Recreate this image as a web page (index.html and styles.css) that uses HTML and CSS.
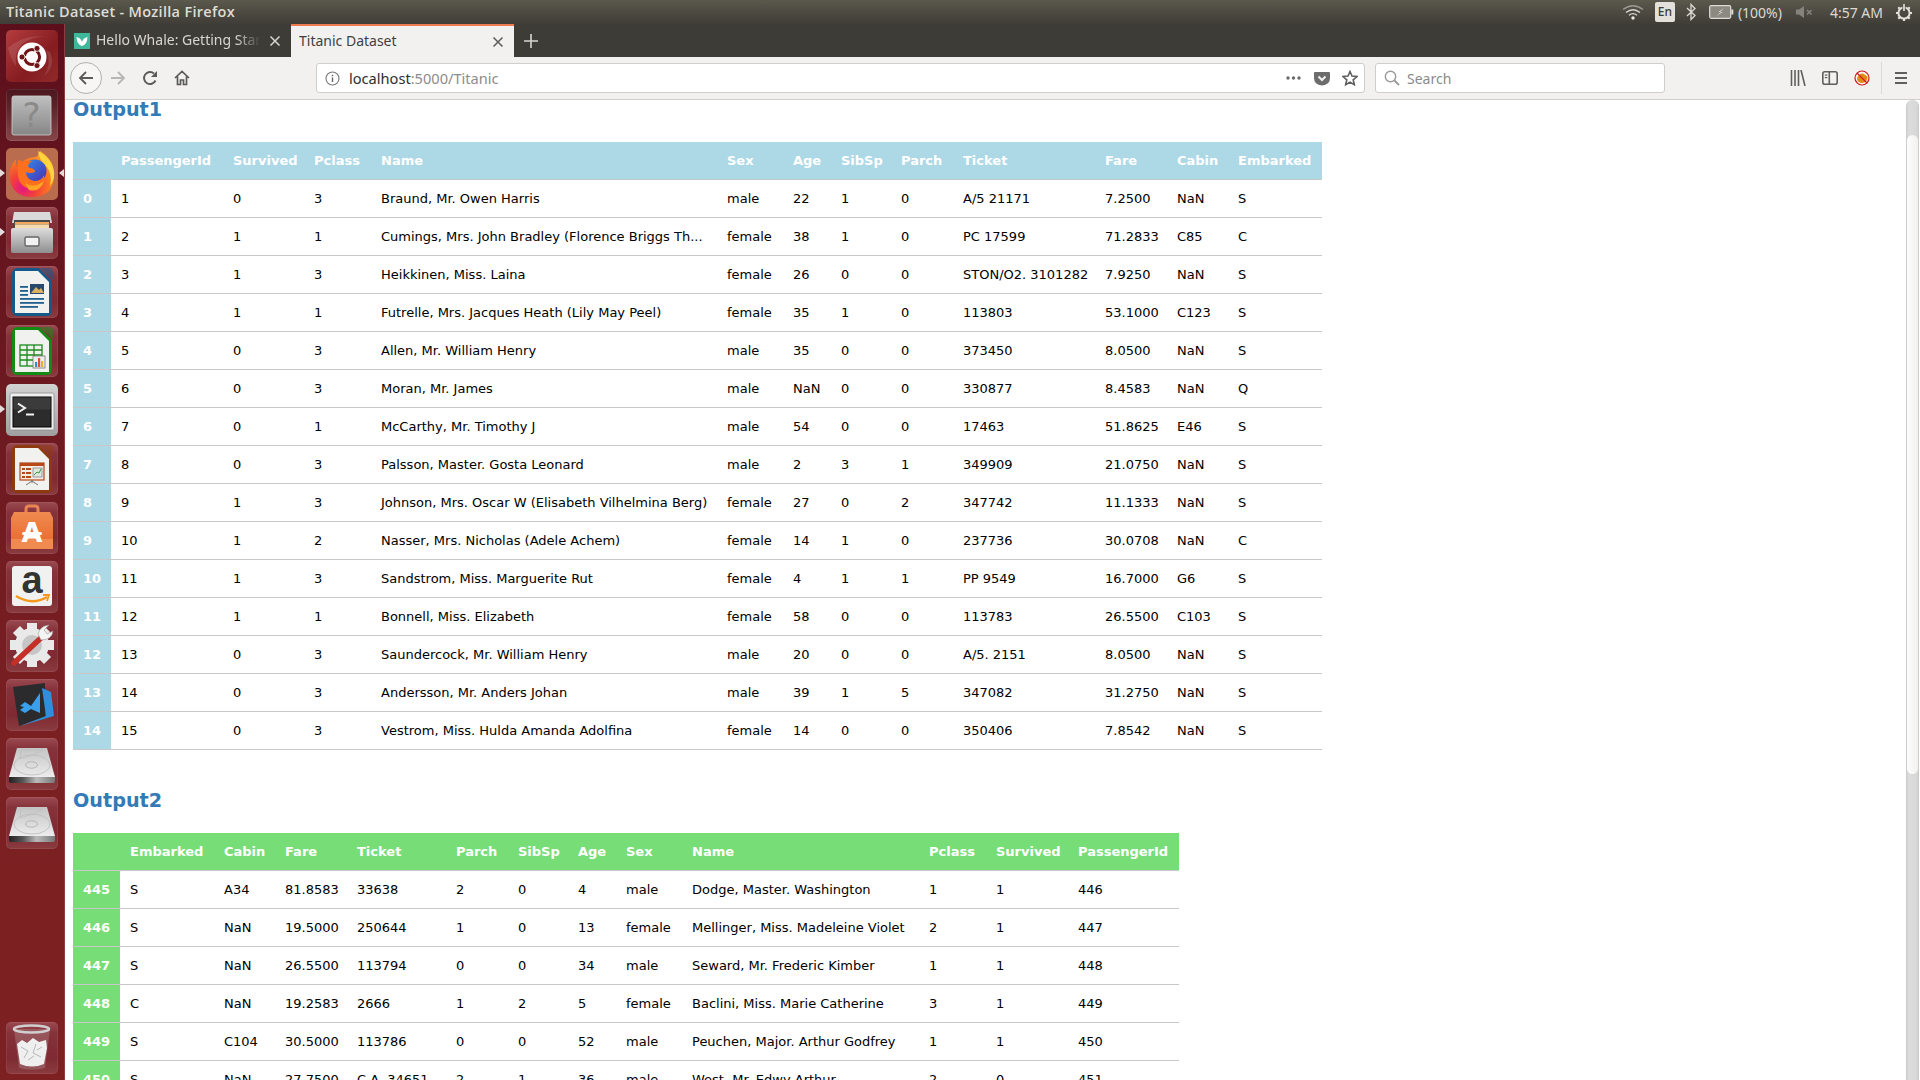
FILE: index.html
```html
<!DOCTYPE html>
<html lang="en">
<head>
<meta charset="utf-8">
<title>Titanic Dataset</title>
<link rel="stylesheet" href="styles.css">
</head>
<body>
<svg class="defs" width="0" height="0" aria-hidden="true">
  <defs>
    <linearGradient id="hddTop" x1="0" y1="0" x2="0" y2="1"><stop offset="0" stop-color="#c4c4c4"/><stop offset="1" stop-color="#ececec"/></linearGradient>
    <linearGradient id="hddFront" x1="0" y1="0" x2="1" y2="0"><stop offset="0" stop-color="#222"/><stop offset="0.3" stop-color="#555"/><stop offset="0.6" stop-color="#bbb"/><stop offset="1" stop-color="#777"/></linearGradient>
    <radialGradient id="foxBody" cx="0.3" cy="0.8" r="0.95"><stop offset="0" stop-color="#e31587"/><stop offset="0.3" stop-color="#f2403a"/><stop offset="0.65" stop-color="#ff7a1f"/><stop offset="1" stop-color="#ffbd2e"/></radialGradient>
    <linearGradient id="foxGlobe" x1="0" y1="0" x2="1" y2="1"><stop offset="0" stop-color="#2f8fe8"/><stop offset="1" stop-color="#4c2ab5"/></linearGradient>
    <linearGradient id="boxGrey" x1="0" y1="0" x2="0" y2="1"><stop offset="0" stop-color="#bfbfbf"/><stop offset="1" stop-color="#868686"/></linearGradient>
    <linearGradient id="bagOrange" x1="0" y1="0" x2="0" y2="1"><stop offset="0" stop-color="#f08a50"/><stop offset="1" stop-color="#e8662a"/></linearGradient>
    <linearGradient id="cabinet" x1="0" y1="0" x2="0" y2="1"><stop offset="0" stop-color="#dcdcdc"/><stop offset="1" stop-color="#8f8f8f"/></linearGradient>
    <symbol id="hdd" viewBox="0 0 52 52">
      <path d="M11 10H41L49 39H3Z" fill="url(#hddTop)"/>
      <ellipse cx="26" cy="27" rx="18" ry="10" fill="none" stroke="#bcbcbc" stroke-width="0.8"/>
      <ellipse cx="25.500" cy="27" rx="6" ry="3.200" fill="none" stroke="#b0b0b0" stroke-width="0.9"/>
      <path d="M15 12H37L27 17L14 21Z" fill="none" stroke="#bdbdbd" stroke-width="0.7"/>
      <path d="M3 39H49V43Q49 45 47 45H5Q3 45 3 43Z" fill="url(#hddFront)"/>
    </symbol>
    <symbol id="doc" viewBox="0 0 52 52">
      <path d="M6 8Q6 2 12 2H33L46 15V44Q46 50 40 50H12Q6 50 6 44Z" fill="currentColor"/>
      <path d="M9 5H32L43 16V47H9Z" fill="#f1f1ef"/>
      <path d="M34 2H43Q47 2 47 6V14Z" fill="currentColor" opacity="0.55"/>
    </symbol>
  </defs>
</svg>

<header class="panel">
  <div class="panel-title">Titanic Dataset - Mozilla Firefox</div>
  <div class="tray">
    <svg class="tray-wifi" width="22" height="16" viewBox="0 0 22 16"><g fill="none" stroke="#d8d6d0" stroke-width="1.4"><path d="M1 5.500Q11 -2 21 5.500" opacity="0.55"/><path d="M4 8.500Q11 3 18 8.500"/><path d="M7 11.200Q11 8 15 11.200"/></g><circle cx="11" cy="14" r="1.7" fill="#e8e6e0"/></svg>
    <div class="tray-lang">En</div>
    <svg class="tray-bt" width="10" height="18" viewBox="0 0 10 18"><path d="M1 5L9 12.500L5 16.500V1.500L9 5.500L1 13" fill="none" stroke="#dedcd6" stroke-width="1.3"/></svg>
    <svg class="tray-batt" width="25" height="14" viewBox="0 0 25 14"><rect x="0.7" y="0.7" width="21" height="12.600" rx="1.5" fill="#8b8980" stroke="#dedcd6" stroke-width="1.2"/><rect x="22.300" y="4.500" width="2" height="5" fill="#dedcd6"/><path d="M15 3L9.500 7H12L7.500 11L13.500 7H11Z" fill="#f0eee8"/></svg>
    <div class="tray-text tray-pct">(100%)</div>
    <svg class="tray-mute" width="17" height="14" viewBox="0 0 17 14"><path d="M0 4.500H3L8 1V13L3 9.500H0Z" fill="#85837b"/><path d="M11 5L15.500 9.500M15.500 5L11 9.500" stroke="#85837b" stroke-width="1.5"/></svg>
    <div class="tray-text tray-time">4:57 AM</div>
    <svg class="tray-power" width="18" height="18" viewBox="0 0 18 18"><g fill="none" stroke="#e2e0da"><circle cx="9" cy="10" r="5.600" stroke-width="2"/><path d="M9 1V9" stroke-width="3" stroke="#48463f"/><path d="M9 1V8" stroke-width="1.7"/><path d="M1 10H3.500M14.500 10H17M3.300 4.300L5 6M3.300 15.700L5 14M14.700 15.700L13 14M14.700 4.300L13 6M9 15.500V18" stroke-width="2.200"/></g></svg>
  </div>
</header>

<div class="desktop">
  <nav class="launcher">
    <div class="tile tile-ubuntu">
      <svg width="52" height="52" viewBox="0 0 52 52"><path d="M2 18Q20 2 46 8Q30 4 16 14Q8 22 10 36Q4 28 2 18Z" fill="#fff" opacity="0.12"/><path d="M44 22Q50 36 38 46Q46 34 40 20Z" fill="#fff" opacity="0.12"/><circle cx="26" cy="27" r="14.500" fill="#fff"/><circle cx="26" cy="27" r="7.600" fill="none" stroke="#6f1417" stroke-width="3"/><g stroke="#fff" stroke-width="1.6"><path d="M26 27L17 27M26 27L30.500 19.200M26 27L30.500 34.800"/></g><g fill="#6f1417" stroke="#fff" stroke-width="0.8"><circle cx="16" cy="27" r="3"/><circle cx="31" cy="18.400" r="3"/><circle cx="31" cy="35.600" r="3"/></g></svg>
    </div>
    <div class="tile tile-help">
      <svg width="52" height="52" viewBox="0 0 52 52"><rect x="6" y="7" width="39" height="39" rx="2" fill="url(#boxGrey)" stroke="#d0d0d0" stroke-width="0.8"/><text x="25.500" y="38" class="help-mark">?</text></svg>
    </div>
    <div class="tile tile-firefox">
      <svg width="52" height="52" viewBox="0 0 52 52"><path d="M34 3Q50 13 48 30Q46 49 26 49Q7 49 4 32Q2 20 10 11Q9 17 12 19Q18 9 30 9Q34 6 34 3Z" fill="url(#foxBody)"/><path d="M32 3Q49 12 48 29Q47 34 44 38Q47 26 40 18Q33 12 32 3Z" fill="#ffd53d"/><circle cx="29" cy="23" r="11.500" fill="url(#foxGlobe)"/><path d="M12 12Q18 14 27 13Q20 16 23 20Q29 20 29 24Q24 26 20 24Q20 31 28 33Q36 33 38 27Q40 40 26 41Q14 40 12 28Q11 19 12 12Z" fill="#ff6f1c"/><path d="M19 35Q28 41 38 33Q34 45 23 42Z" fill="#ffa526"/></svg>
    </div>
    <div class="tile tile-dark">
      <svg width="52" height="52" viewBox="0 0 52 52"><path d="M8 5H44L46 16H6Z" fill="#d9d9d9"/><rect x="8" y="13" width="36" height="10" fill="#4a4a4a"/><rect x="9" y="15" width="34" height="2.500" fill="#f0a860"/><rect x="9" y="17.500" width="34" height="4" fill="#f7d9ae"/><rect x="5" y="21" width="42" height="25" rx="2" fill="url(#cabinet)"/><rect x="19" y="30" width="14" height="9" rx="1.5" fill="#f2f2f2" stroke="#666" stroke-width="1.4"/></svg>
    </div>
    <div class="tile tile-dark">
      <svg class="ico-writer" width="52" height="52" viewBox="0 0 52 52"><use href="#doc"/><rect x="14" y="20" width="8" height="1.8" fill="#1f5f8e"/><rect x="14" y="24" width="8" height="1.8" fill="#1f5f8e"/><rect x="14" y="28" width="8" height="1.8" fill="#1f5f8e"/><rect x="14" y="32" width="24" height="1.8" fill="#1f5f8e"/><rect x="14" y="36" width="24" height="1.8" fill="#1f5f8e"/><rect x="14" y="40" width="18" height="1.8" fill="#1f5f8e"/><rect x="24" y="18" width="14" height="10" fill="#27496d"/><path d="M25 27L30 21L33 24L35 22L38 27Z" fill="#d9b060"/></svg>
    </div>
    <div class="tile tile-dark">
      <svg class="ico-calc" width="52" height="52" viewBox="0 0 52 52"><use href="#doc"/><g fill="none" stroke="#1c8a1e" stroke-width="1.3"><rect x="14" y="20" width="22" height="21"/><path d="M14 25H36M14 30H36M14 35H36M21 20V41M28 20V41"/></g><rect x="27" y="31" width="12" height="12" fill="#eee" stroke="#777" stroke-width="0.8"/><rect x="29" y="37" width="2.200" height="5" fill="#2b8fd8"/><rect x="32" y="33" width="2.200" height="9" fill="#e05030"/><rect x="35" y="36" width="2.200" height="6" fill="#e6b030"/></svg>
    </div>
    <div class="tile tile-term">
      <svg width="52" height="52" viewBox="0 0 52 52"><rect x="4" y="9" width="44" height="37" rx="1.5" fill="#eee" stroke="#8a8a8a" stroke-width="0.8"/><rect x="6.500" y="12.500" width="39" height="31" fill="#000"/><rect x="7.500" y="13.500" width="37" height="29" fill="#2c2c2c"/><rect x="7.500" y="13.500" width="37" height="12" fill="#3b3b3b"/><path d="M12 19.500L19 24L12 28.500" fill="none" stroke="#f2f2f2" stroke-width="2"/><rect x="20" y="29.500" width="8" height="2" fill="#f2f2f2"/></svg>
    </div>
    <div class="tile tile-dark">
      <svg class="ico-impress" width="52" height="52" viewBox="0 0 52 52"><use href="#doc"/><rect x="14" y="20" width="24" height="17" fill="#f6ece4" stroke="#b5491a" stroke-width="1.2"/><rect x="14" y="20" width="24" height="3" fill="#b5491a"/><g fill="#b5491a"><rect x="16" y="25" width="3" height="2"/><rect x="20" y="25" width="5" height="2"/><rect x="16" y="29" width="3" height="2"/><rect x="20" y="29" width="5" height="2"/><rect x="16" y="33" width="3" height="2"/><rect x="20" y="33" width="5" height="2"/></g><rect x="27" y="25" width="9" height="9" fill="#dce8dc" stroke="#667" stroke-width="0.6"/><path d="M28 32L31 29L33 30L35 26" fill="none" stroke="#3b9a3b" stroke-width="1"/><path d="M26 37V40M26 38L20 42M26 38L32 42" stroke="#777" stroke-width="1" fill="none"/></svg>
    </div>
    <div class="tile tile-dark">
      <svg width="52" height="52" viewBox="0 0 52 52"><path d="M20 12V7Q20 4 23 4H29Q32 4 32 7V12" fill="none" stroke="#e98552" stroke-width="3"/><path d="M8 10H44L47 16V47H5V16Z" fill="url(#bagOrange)"/><rect x="5" y="37" width="42" height="10" fill="#f08a50"/><text x="26" y="40" class="bag-mark">A</text><rect x="16" y="30" width="20" height="3" rx="1.5" fill="#fff"/></svg>
    </div>
    <div class="tile tile-dark">
      <svg width="52" height="52" viewBox="0 0 52 52"><rect x="6" y="5" width="40" height="40" rx="3" fill="#f1f1f1"/><text x="26" y="32" class="amazon-mark">a</text><path d="M10 35Q26 45 41 36" fill="none" stroke="#f39a1d" stroke-width="2.400"/><path d="M37 34L43 34L41 40" fill="none" stroke="#f39a1d" stroke-width="1.8"/></svg>
    </div>
    <div class="tile tile-dark">
      <svg width="52" height="52" viewBox="0 0 52 52"><g fill="#e9e9e9"><rect x="21" y="3" width="10" height="44"/><rect x="21" y="3" width="10" height="44" transform="rotate(45 26 25)"/><rect x="21" y="3" width="10" height="44" transform="rotate(90 26 25)"/><rect x="21" y="3" width="10" height="44" transform="rotate(135 26 25)"/><circle cx="26" cy="25" r="17"/></g><circle cx="26" cy="25" r="10" fill="#c6c6c6"/><path d="M8 43L36 17" stroke="#c62e28" stroke-width="5.500" stroke-linecap="round"/><path d="M35 20L32 14Q34 6 43 5L38 10L41 14L47 11Q46 20 35 20Z" fill="#f4f4f4" stroke="#999" stroke-width="0.6"/></svg>
    </div>
    <div class="tile tile-dark">
      <svg width="52" height="52" viewBox="0 0 52 52"><path d="M7 8L39 4L39 38L13 47Z" fill="#2b2b2d"/><path d="M36 9L45 13L48 37L14 47L40 37Z" fill="#2f8fdc"/><path d="M14 27L19 23L25 27L34 14V34L25 30L19 34L14 31L18 28Z" fill="#3aa0ee"/></svg>
    </div>
    <div class="tile tile-dark"><svg width="52" height="52"><use href="#hdd"/></svg></div>
    <div class="tile tile-dark"><svg width="52" height="52"><use href="#hdd"/></svg></div>
    <div class="tile tile-dark tile-trash">
      <svg width="52" height="52" viewBox="0 0 52 52"><path d="M8 7L13 46Q26 49 39 46L44 7Z" fill="#d8d8d8" opacity="0.22"/><path d="M11 22L16 18L21 21L27 16L33 20L40 18L41 26L38 42Q26 47 14 42Z" fill="#efefef"/><path d="M15 25L22 29L18 36M30 22L27 31L35 35M22 38L28 34M36 25L31 28" fill="none" stroke="#b8b8b8" stroke-width="1"/><ellipse cx="25.500" cy="7" rx="17.500" ry="3.500" fill="none" stroke="#cfcfcf" stroke-width="2.600"/></svg>
    </div>
    <i class="pip pip-l pip-fox-l"></i>
    <i class="pip pip-r pip-fox-r"></i>
    <i class="pip pip-l pip-files"></i>
    <i class="pip pip-l pip-term"></i>
  </nav>

  <main class="browser">
    <div class="tabstrip">
      <div class="tab tab-bg">
        <svg class="favicon" width="16" height="16" viewBox="0 0 16 16"><rect width="16" height="16" fill="#3fb79b"/><path d="M8 13Q3 12 2.500 4Q7 5 8 9Q9 5 13.500 4Q13 12 8 13Z" fill="#fff"/></svg>
        <span class="tab-label">Hello Whale: Getting Started</span>
        <svg class="tab-close" width="12" height="12" viewBox="0 0 12 12"><path d="M1.500 1.500L10.500 10.500M10.500 1.500L1.500 10.500" stroke="#d8d6d0" stroke-width="1.5"/></svg>
      </div>
      <div class="tab tab-active">
        <span class="tab-label">Titanic Dataset</span>
        <svg class="tab-close" width="12" height="12" viewBox="0 0 12 12"><path d="M1.500 1.500L10.500 10.500M10.500 1.500L1.500 10.500" stroke="#5b5b5b" stroke-width="1.5"/></svg>
      </div>
      <svg class="newtab" width="14" height="14" viewBox="0 0 14 14"><path d="M7 0V14M0 7H14" stroke="#d8d6d0" stroke-width="1.6"/></svg>
    </div>

    <div class="toolbar">
      <div class="nav-back"><svg width="16" height="16" viewBox="0 0 16 16"><path d="M15 8H2M8 2L2 8L8 14" fill="none" stroke="#5a5a5a" stroke-width="1.8"/></svg></div>
      <svg class="nav-fwd" width="16" height="16" viewBox="0 0 16 16"><path d="M1 8H14M8 2L14 8L8 14" fill="none" stroke="#b6b6b6" stroke-width="1.8"/></svg>
      <svg class="nav-reload" width="16" height="16" viewBox="0 0 16 16"><path d="M13.500 10.500A6 6 0 1 1 12 3.500" fill="none" stroke="#5a5a5a" stroke-width="1.9"/><path d="M15 1V7H9Z" fill="#5a5a5a"/></svg>
      <svg class="nav-home" width="16" height="16" viewBox="0 0 16 16"><path d="M1 8L8 1.500L15 8M3.500 6.500V14.500H6.500V10H9.500V14.500H12.500V6.500" fill="none" stroke="#5a5a5a" stroke-width="1.7"/></svg>
      <div class="urlbar">
        <svg class="url-info" width="15" height="15" viewBox="0 0 15 15"><circle cx="7.500" cy="7.500" r="6.500" fill="none" stroke="#777" stroke-width="1.1"/><rect x="6.800" y="6.500" width="1.4" height="4.500" fill="#666"/><rect x="6.800" y="3.800" width="1.4" height="1.5" fill="#666"/></svg>
        <span class="url-text"><b class="url-host">localhost</b>:5000/Titanic</span>
        <svg class="url-dots" width="15" height="4" viewBox="0 0 15 4"><g fill="#6a6a6a"><circle cx="2" cy="2" r="1.7"/><circle cx="7.500" cy="2" r="1.7"/><circle cx="13" cy="2" r="1.7"/></g></svg>
        <svg class="url-pocket" width="16" height="15" viewBox="0 0 16 15"><path d="M1 1H15Q16 1 16 2V7Q16 14 8 14.500Q0 14 0 7V2Q0 1 1 1Z" fill="#6c6c6c"/><path d="M4.500 5.500L8 9L11.500 5.500" fill="none" stroke="#f2f1ef" stroke-width="2"/></svg>
        <svg class="url-star" width="16" height="16" viewBox="0 0 16 16"><path d="M8 1.500L10 6L15 6.500L11.200 9.800L12.300 14.700L8 12.100L3.700 14.700L4.800 9.800L1 6.500L6 6Z" fill="none" stroke="#5f5f5f" stroke-width="1.6"/></svg>
      </div>
      <div class="searchbar">
        <svg class="search-ico" width="16" height="16" viewBox="0 0 16 16"><circle cx="6.500" cy="6.500" r="5.200" fill="none" stroke="#9a9a9a" stroke-width="1.4"/><path d="M10.500 10.500L15 15" stroke="#9a9a9a" stroke-width="1.8"/></svg>
        <span class="search-text">Search</span>
      </div>
      <svg class="tool-lib" width="16" height="16" viewBox="0 0 16 16"><path d="M1.500 0V16M5 0V16M8.500 0V16M11 0L15 16" stroke="#5f5f5f" stroke-width="1.6" fill="none"/></svg>
      <svg class="tool-side" width="16" height="16" viewBox="0 0 16 16"><rect x="0.8" y="1.8" width="14.400" height="12.400" rx="2" fill="none" stroke="#5f5f5f" stroke-width="1.6"/><rect x="6.500" y="2" width="1.6" height="12" fill="#5f5f5f"/><rect x="2.800" y="4.500" width="2.600" height="1.2" fill="#5f5f5f"/><rect x="2.800" y="7" width="2.600" height="1.2" fill="#5f5f5f"/></svg>
      <svg class="tool-ns" width="16" height="16" viewBox="0 0 16 16"><circle cx="8" cy="8" r="7" fill="#f6f2ee" stroke="#d2161c" stroke-width="1.2"/><path d="M3 9Q4 3.500 9 3.500L13.500 6.500Q13.500 13 8 13Q4 13 3 9Z" fill="#e08a18"/><path d="M3 3L13 13" stroke="#d2161c" stroke-width="1.1"/></svg>
      <div class="tool-sep"></div>
      <svg class="tool-menu" width="12" height="12" viewBox="0 0 12 12"><path d="M0 1H12M0 6H12M0 11H12" stroke="#5f5f5f" stroke-width="1.8"/></svg>
    </div>

    <div class="content">
      <h3 class="title">Output1</h3>
      <table class="data data-blue" id="t1"><colgroup><col><col><col><col><col><col><col><col><col><col><col><col><col></colgroup><thead><tr><th></th><th>PassengerId</th><th>Survived</th><th>Pclass</th><th>Name</th><th>Sex</th><th>Age</th><th>SibSp</th><th>Parch</th><th>Ticket</th><th>Fare</th><th>Cabin</th><th>Embarked</th></tr></thead><tbody>
        <tr><th>0</th><td>1</td><td>0</td><td>3</td><td>Braund, Mr. Owen Harris</td><td>male</td><td>22</td><td>1</td><td>0</td><td>A/5 21171</td><td>7.2500</td><td>NaN</td><td>S</td></tr>
        <tr><th>1</th><td>2</td><td>1</td><td>1</td><td>Cumings, Mrs. John Bradley (Florence Briggs Th...</td><td>female</td><td>38</td><td>1</td><td>0</td><td>PC 17599</td><td>71.2833</td><td>C85</td><td>C</td></tr>
        <tr><th>2</th><td>3</td><td>1</td><td>3</td><td>Heikkinen, Miss. Laina</td><td>female</td><td>26</td><td>0</td><td>0</td><td>STON/O2. 3101282</td><td>7.9250</td><td>NaN</td><td>S</td></tr>
        <tr><th>3</th><td>4</td><td>1</td><td>1</td><td>Futrelle, Mrs. Jacques Heath (Lily May Peel)</td><td>female</td><td>35</td><td>1</td><td>0</td><td>113803</td><td>53.1000</td><td>C123</td><td>S</td></tr>
        <tr><th>4</th><td>5</td><td>0</td><td>3</td><td>Allen, Mr. William Henry</td><td>male</td><td>35</td><td>0</td><td>0</td><td>373450</td><td>8.0500</td><td>NaN</td><td>S</td></tr>
        <tr><th>5</th><td>6</td><td>0</td><td>3</td><td>Moran, Mr. James</td><td>male</td><td>NaN</td><td>0</td><td>0</td><td>330877</td><td>8.4583</td><td>NaN</td><td>Q</td></tr>
        <tr><th>6</th><td>7</td><td>0</td><td>1</td><td>McCarthy, Mr. Timothy J</td><td>male</td><td>54</td><td>0</td><td>0</td><td>17463</td><td>51.8625</td><td>E46</td><td>S</td></tr>
        <tr><th>7</th><td>8</td><td>0</td><td>3</td><td>Palsson, Master. Gosta Leonard</td><td>male</td><td>2</td><td>3</td><td>1</td><td>349909</td><td>21.0750</td><td>NaN</td><td>S</td></tr>
        <tr><th>8</th><td>9</td><td>1</td><td>3</td><td>Johnson, Mrs. Oscar W (Elisabeth Vilhelmina Berg)</td><td>female</td><td>27</td><td>0</td><td>2</td><td>347742</td><td>11.1333</td><td>NaN</td><td>S</td></tr>
        <tr><th>9</th><td>10</td><td>1</td><td>2</td><td>Nasser, Mrs. Nicholas (Adele Achem)</td><td>female</td><td>14</td><td>1</td><td>0</td><td>237736</td><td>30.0708</td><td>NaN</td><td>C</td></tr>
        <tr><th>10</th><td>11</td><td>1</td><td>3</td><td>Sandstrom, Miss. Marguerite Rut</td><td>female</td><td>4</td><td>1</td><td>1</td><td>PP 9549</td><td>16.7000</td><td>G6</td><td>S</td></tr>
        <tr><th>11</th><td>12</td><td>1</td><td>1</td><td>Bonnell, Miss. Elizabeth</td><td>female</td><td>58</td><td>0</td><td>0</td><td>113783</td><td>26.5500</td><td>C103</td><td>S</td></tr>
        <tr><th>12</th><td>13</td><td>0</td><td>3</td><td>Saundercock, Mr. William Henry</td><td>male</td><td>20</td><td>0</td><td>0</td><td>A/5. 2151</td><td>8.0500</td><td>NaN</td><td>S</td></tr>
        <tr><th>13</th><td>14</td><td>0</td><td>3</td><td>Andersson, Mr. Anders Johan</td><td>male</td><td>39</td><td>1</td><td>5</td><td>347082</td><td>31.2750</td><td>NaN</td><td>S</td></tr>
        <tr><th>14</th><td>15</td><td>0</td><td>3</td><td>Vestrom, Miss. Hulda Amanda Adolfina</td><td>female</td><td>14</td><td>0</td><td>0</td><td>350406</td><td>7.8542</td><td>NaN</td><td>S</td></tr>
      </tbody></table>
      <h3 class="title title-next">Output2</h3>
      <table class="data data-green" id="t2"><colgroup><col><col><col><col><col><col><col><col><col><col><col><col><col></colgroup><thead><tr><th></th><th>Embarked</th><th>Cabin</th><th>Fare</th><th>Ticket</th><th>Parch</th><th>SibSp</th><th>Age</th><th>Sex</th><th>Name</th><th>Pclass</th><th>Survived</th><th>PassengerId</th></tr></thead><tbody>
        <tr><th>445</th><td>S</td><td>A34</td><td>81.8583</td><td>33638</td><td>2</td><td>0</td><td>4</td><td>male</td><td>Dodge, Master. Washington</td><td>1</td><td>1</td><td>446</td></tr>
        <tr><th>446</th><td>S</td><td>NaN</td><td>19.5000</td><td>250644</td><td>1</td><td>0</td><td>13</td><td>female</td><td>Mellinger, Miss. Madeleine Violet</td><td>2</td><td>1</td><td>447</td></tr>
        <tr><th>447</th><td>S</td><td>NaN</td><td>26.5500</td><td>113794</td><td>0</td><td>0</td><td>34</td><td>male</td><td>Seward, Mr. Frederic Kimber</td><td>1</td><td>1</td><td>448</td></tr>
        <tr><th>448</th><td>C</td><td>NaN</td><td>19.2583</td><td>2666</td><td>1</td><td>2</td><td>5</td><td>female</td><td>Baclini, Miss. Marie Catherine</td><td>3</td><td>1</td><td>449</td></tr>
        <tr><th>449</th><td>S</td><td>C104</td><td>30.5000</td><td>113786</td><td>0</td><td>0</td><td>52</td><td>male</td><td>Peuchen, Major. Arthur Godfrey</td><td>1</td><td>1</td><td>450</td></tr>
        <tr><th>450</th><td>S</td><td>NaN</td><td>27.7500</td><td>C.A. 34651</td><td>2</td><td>1</td><td>36</td><td>male</td><td>West, Mr. Edwy Arthur</td><td>2</td><td>0</td><td>451</td></tr>
      </tbody></table>
      <div class="scrollbar"><div class="thumb"></div></div>
    </div>
  </main>
</div>
</body>
</html>
```

FILE: styles.css
```css
* { box-sizing: border-box; }
html, body { margin: 0; height: 100%; overflow: hidden; }
body { width: 1920px; height: 1080px; display: flex; flex-direction: column; background: #fff; font-family: "Noto Sans", sans-serif; }
.defs { position: absolute; }
svg { display: block; flex: none; }

/* top panel */
.panel { height: 24px; flex: none; display: flex; align-items: center; background: linear-gradient(#5b584c, #3f3d37); color: #e6e4de; }
.panel-title { margin-left: 6px; margin-bottom: 2px; font-family: "Open Sans", sans-serif; font-size: 14.5px; font-weight: 600; color: #dfddd7; letter-spacing: .3px; }
.tray { margin-left: auto; display: flex; align-items: center; }
.tray-wifi { margin-right: 11px; }
.tray-lang { width: 20px; height: 20px; margin-right: 11px; border-radius: 2px; background: #e4e1da; color: #3c3b35; font-size: 12px; font-weight: 500; line-height: 20px; text-align: center; }
.tray-bt { margin-right: 13px; }
.tray-batt { margin-right: 4px; }
.tray-text { font-family: "Noto Sans", sans-serif; font-size: 14px; color: #dcdad4; }
.tray-pct { margin-right: 14px; }
.tray-mute { margin-right: 17px; }
.tray-time { margin-right: 12px; }
.tray-power { margin-right: 7px; }

.desktop { flex: 1; min-height: 0; display: flex; }

/* launcher */
.launcher { width: 65px; flex: none; position: relative; display: flex; flex-direction: column; gap: 7px; padding: 6px 0 6px 6px; background: linear-gradient(#5c0f1b, #6a1820 30%, #7b2022 70%, #7d2022); border-right: 1px solid #8a4040; }
.tile { width: 52px; height: 52px; border-radius: 5px; flex: none; }
.tile-dark { background: linear-gradient(#9b4a52 0, #86323a 20%, #7f2a32 70%, #8a3c40 100%); box-shadow: inset 0 0 0 1px rgba(255,255,255,.07); }
.tile-ubuntu { background: linear-gradient(135deg, #b43c3e, #851d20 60%, #902a2a); }
.tile-help { background: linear-gradient(#4a161e, #5a2228 30%, #86464a); box-shadow: inset 0 0 0 1px rgba(255,255,255,.1); }
.tile-firefox { background: #b96d4e; }
.tile-term { background: linear-gradient(#d2d2d2, #9f9f9f); }
.tile-trash { margin-top: auto; }
.help-mark { font-family: "DejaVu Sans", sans-serif; font-size: 34px; fill: #8a8a8a; text-anchor: middle; }
.bag-mark { font-family: "DejaVu Sans", sans-serif; font-size: 27px; font-weight: 700; fill: #fff; text-anchor: middle; }
.amazon-mark { font-family: "Liberation Sans", sans-serif; font-size: 38px; font-weight: 700; fill: #333; text-anchor: middle; }
.ico-writer { color: #14598a; }
.ico-calc { color: #128a14; }
.ico-impress { color: #8e3a10; }
.pip { position: absolute; width: 0; height: 0; border-top: 4px solid transparent; border-bottom: 4px solid transparent; }
.pip-l { left: 0; border-left: 5px solid #e4dcdc; }
.pip-r { right: 0; border-right: 5px solid #e4dcdc; }
.pip-fox-l, .pip-fox-r { top: 145px; }
.pip-files { top: 204px; }
.pip-term { top: 381px; }

/* browser */
.browser { flex: 1; min-width: 0; display: flex; flex-direction: column; }
.tabstrip { height: 33px; flex: none; display: flex; align-items: stretch; background: #3e3c36; font-family: "Noto Sans", sans-serif; font-size: 14px; }
.tab { display: flex; align-items: center; }
.tab-label { white-space: nowrap; overflow: hidden; flex: 1; min-width: 0; padding-bottom: 2px; }
.tab-bg { width: 226px; padding: 0 10px 0 9px; color: #d8d6d0; }
.tab-bg .tab-label { margin-left: 6px; -webkit-mask-image: linear-gradient(to right, #000 85%, transparent); mask-image: linear-gradient(to right, #000 85%, transparent); }
.tab-active { width: 223px; padding: 0 10px 0 8px; background: #f2f1ef; border-top: 2px solid #ee7a52; color: #3f3f3f; }
.tab-close { margin-left: 8px; }
.newtab { align-self: center; margin-left: 10px; }

.toolbar { height: 43px; flex: none; display: flex; align-items: center; background: #f2f1ef; border-bottom: 1px solid #cfcecb; }
.nav-back { width: 32px; height: 32px; margin-left: 5px; border-radius: 50%; border: 1px solid #b2b1ae; background: #f7f6f5; display: flex; align-items: center; justify-content: center; }
.nav-fwd { margin-left: 8px; }
.nav-reload { margin-left: 16px; }
.nav-home { margin-left: 16px; }
.urlbar { width: 1049px; height: 30px; margin-left: 126px; border: 1px solid #cfcecb; border-radius: 3px; background: #fff; display: flex; align-items: center; padding: 0 6px 0 8px; }
.url-text { margin-left: 9px; flex: 1; font-size: 14.6px; color: #8c8c8c; }
.url-host { font-weight: 400; color: #2e2e2e; }
.url-dots { margin-right: 13px; }
.url-pocket { margin-right: 12px; }
.searchbar { width: 290px; height: 30px; margin-left: 10px; border: 1px solid #cfcecb; border-radius: 3px; background: #fff; display: flex; align-items: center; padding-left: 8px; }
.search-text { margin-left: 7px; font-size: 14px; color: #8a8a8a; }
.tool-lib { margin-left: 125px; }
.tool-side { margin-left: 16px; }
.tool-ns { margin-left: 16px; }
.tool-sep { width: 1px; height: 32px; margin-left: 11px; background: #dbdad7; }
.tool-menu { margin-left: 13px; }

/* page content */
.content { flex: 1; min-height: 0; overflow: hidden; position: relative; padding-left: 8px; background: #fff; font-family: "DejaVu Sans", sans-serif; }
.title { margin: 0 0 20px; font-size: 19.2px; line-height: 22px; font-weight: 700; color: #337ab7; transform: translateY(-1px); }
.title-next { margin: 40px 0 21px; transform: none; }
.data { border-collapse: separate; border-spacing: 0; table-layout: fixed; font-size: 13px; color: #000; }
.data-blue { width: 1249px; }
.data-green { width: 1106px; }
.data th, .data td { padding: 0 10px; height: 38px; text-align: left; white-space: nowrap; border-bottom: 1px solid #c8c8c8; }
.data th { font-weight: 700; color: #fff; }
.data-blue th { background: #add8e6; }
.data-green th { background: #77dd77; }
.data-blue col:nth-child(1) { width: 38px; }
.data-blue col:nth-child(2) { width: 112px; }
.data-blue col:nth-child(3) { width: 81px; }
.data-blue col:nth-child(4) { width: 67px; }
.data-blue col:nth-child(5) { width: 346px; }
.data-blue col:nth-child(6) { width: 66px; }
.data-blue col:nth-child(7) { width: 48px; }
.data-blue col:nth-child(8) { width: 60px; }
.data-blue col:nth-child(9) { width: 62px; }
.data-blue col:nth-child(10) { width: 142px; }
.data-blue col:nth-child(11) { width: 72px; }
.data-blue col:nth-child(12) { width: 61px; }
.data-blue col:nth-child(13) { width: 94px; }
.data-green col:nth-child(1) { width: 47px; }
.data-green col:nth-child(2) { width: 94px; }
.data-green col:nth-child(3) { width: 61px; }
.data-green col:nth-child(4) { width: 72px; }
.data-green col:nth-child(5) { width: 99px; }
.data-green col:nth-child(6) { width: 62px; }
.data-green col:nth-child(7) { width: 60px; }
.data-green col:nth-child(8) { width: 48px; }
.data-green col:nth-child(9) { width: 66px; }
.data-green col:nth-child(10) { width: 237px; }
.data-green col:nth-child(11) { width: 67px; }
.data-green col:nth-child(12) { width: 82px; }
.data-green col:nth-child(13) { width: 111px; }
.scrollbar { position: absolute; top: 0; right: 1px; width: 13px; height: 100%; background: linear-gradient(to right, #c9c9c9, #dcdcdc 20%, #d8d8d8 80%, #c9c9c9); border-radius: 6px 6px 0 0; }
.thumb { position: absolute; top: 35px; left: 1px; right: 1px; height: 639px; border-radius: 6px; background: linear-gradient(to right, #fdfdfd, #f2f1ef); }
```
